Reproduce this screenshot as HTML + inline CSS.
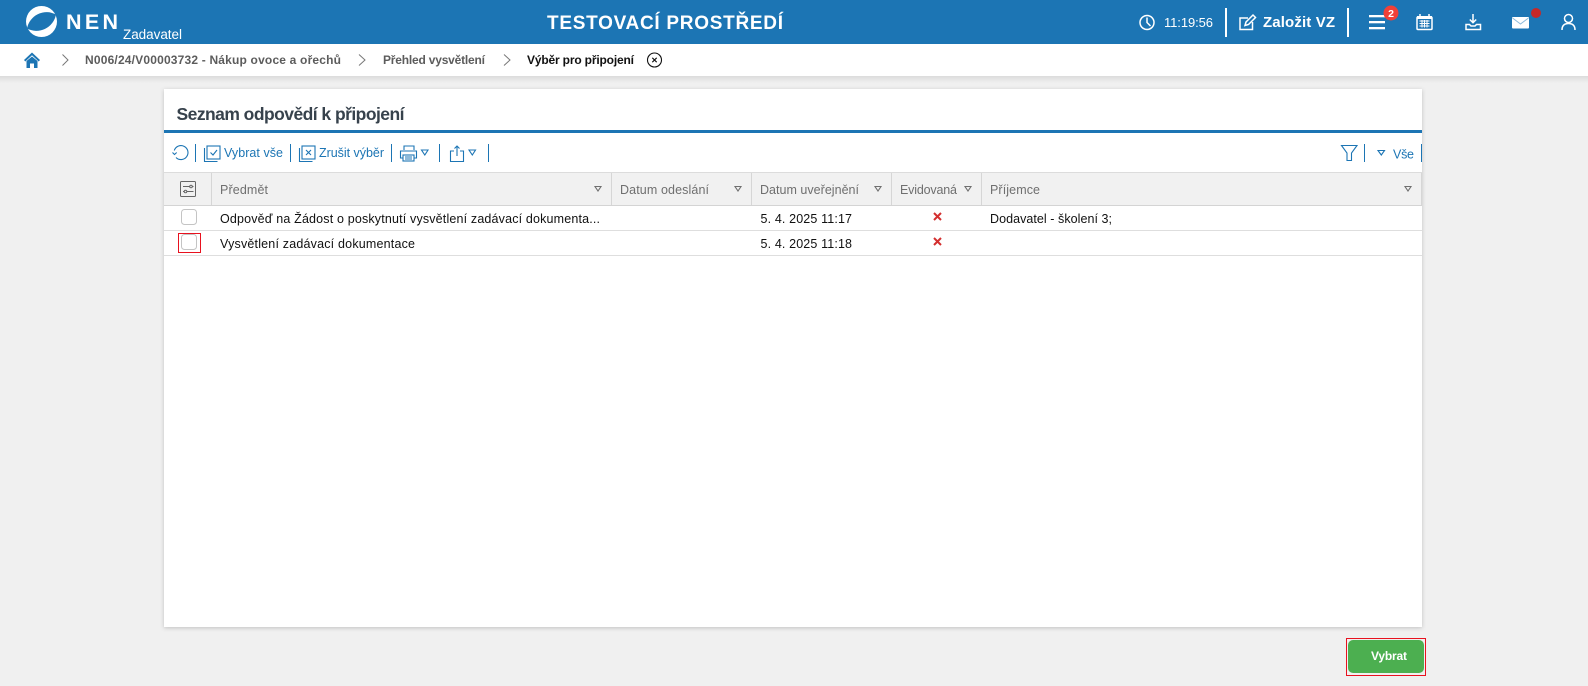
<!DOCTYPE html>
<html lang="cs">
<head>
<meta charset="utf-8">
<title>Seznam odpovědí k připojení</title>
<style>
html,body{margin:0;padding:0;width:1588px;height:686px;overflow:hidden;background:#f0f0f0}
svg{display:block}
text{font-family:"Liberation Sans",Arial,sans-serif;white-space:pre}
.hd{fill:#6f6f6f;font-size:12.5px}
.td{fill:#111;font-size:12.5px}
.bc{fill:#5c5c5c;font-size:12px;font-weight:bold}
.tb{fill:#1c75b4;font-size:12.5px}
.ic{fill:none;stroke:#1c75b4;stroke-width:1.1}
.w{fill:none;stroke:#fff;stroke-width:1.5}
.tri{fill:none;stroke:#6f6f6f;stroke-width:1.1}
</style>
</head>
<body>
<svg width="1588" height="686" viewBox="0 0 1588 686" xmlns="http://www.w3.org/2000/svg">
<defs>
<linearGradient id="sh" x1="0" y1="0" x2="0" y2="1"><stop offset="0" stop-color="#dcdcdc"/><stop offset="1" stop-color="#f0f0f0"/></linearGradient>
<filter id="ps" x="-2%" y="-2%" width="104%" height="104%"><feDropShadow dx="0" dy="1" stdDeviation="2" flood-color="#000" flood-opacity=".2"/></filter>
</defs>
<rect width="1588" height="686" fill="#f0f0f0"/>
<rect y="76" width="1588" height="7" fill="url(#sh)"/>
<rect y="44" width="1588" height="32" fill="#fff"/>
<rect width="1588" height="44" fill="#1c75b4"/>

<!-- logo -->
<circle cx="41.500" cy="21.500" r="15.500" fill="#fff"/>
<path d="M27 28.500A20 20 0 0 1 56 14.500A20 20 0 0 1 27 28.500Z" fill="#1c75b4"/>
<text x="66" y="29" font-size="21.500" font-weight="bold" fill="#fff" textLength="52" lengthAdjust="spacing">NEN</text>
<text x="123" y="39" font-size="13.500" fill="#fff" textLength="59" lengthAdjust="spacing">Zadavatel</text>
<text x="547" y="29" font-size="19" font-weight="bold" fill="#fff" textLength="236" lengthAdjust="spacing">TESTOVACÍ PROSTŘEDÍ</text>

<!-- header right -->
<circle cx="1147" cy="22.500" r="7" class="w"/>
<path d="M1147 17.500V22.500L1150.500 26" class="w"/>
<text x="1164" y="27" font-size="13" fill="#fff" textLength="49" lengthAdjust="spacing">11:19:56</text>
<rect x="1225" y="8" width="2" height="29" fill="#fff"/>
<path d="M1248 18H1240V29.500H1252.500V22" class="w"/>
<path d="M1245 25.500L1246 22L1253 15L1255.500 17.500L1248.500 24.500Z" class="w" stroke-width="1.200"/>
<text x="1263" y="27" font-size="15" font-weight="bold" fill="#fff" textLength="72" lengthAdjust="spacing">Založit VZ</text>
<rect x="1347" y="8" width="2" height="29" fill="#fff"/>
<rect x="1369" y="15" width="16" height="2.300" fill="#fff"/>
<rect x="1369" y="21" width="16" height="2.300" fill="#fff"/>
<rect x="1369" y="27" width="16" height="2.300" fill="#fff"/>
<circle cx="1391" cy="13" r="7.500" fill="#f04038"/>
<text x="1391" y="17" font-size="10.500" font-weight="bold" fill="#fff" text-anchor="middle">2</text>
<!-- calendar -->
<rect x="1417" y="17" width="15" height="12.500" rx="1" class="w"/>
<rect x="1417" y="16" width="15" height="3" fill="#fff"/>
<path d="M1420 14V17M1429 14V17" class="w"/>
<path d="M1419.500 21H1429.500M1419.500 23.500H1429.500M1419.500 26H1429.500M1422 20V27.500M1424.500 20V27.500M1427 20V27.500" stroke="#fff" stroke-width="1" fill="none"/>
<!-- download -->
<path d="M1473 14V22.500M1469.800 19.500L1473 22.700L1476.200 19.500" class="w"/>
<path d="M1466 24.500V29.500H1480.500V24.500H1476.500L1475 26H1471L1469.500 24.500Z" class="w"/>
<!-- mail -->
<rect x="1512" y="17" width="17" height="11.500" rx="1" fill="#fff"/>
<path d="M1512.500 18L1520.500 24L1528.500 18" fill="none" stroke="#8dbbdc" stroke-width="1"/>
<circle cx="1536" cy="13" r="5" fill="#c62828"/>
<!-- user -->
<circle cx="1568.500" cy="18.500" r="4" class="w"/>
<path d="M1562 30C1562 25.500 1564.500 23.500 1568.500 23.500C1572.500 23.500 1575 25.500 1575 30" class="w"/>

<!-- breadcrumb -->
<path d="M24 60L32 52.500L40 60L38.700 61.500L32 55.300L25.300 61.500Z" fill="#1c75b4"/>
<path d="M26.500 61L32 56.500L37.500 61V68H34V63.500H30V68H26.500Z" fill="#1c75b4"/>
<path d="M62.500 54.500L68 60L62.500 65.500" fill="none" stroke="#777" stroke-width="1"/>
<text x="85" y="64" class="bc" textLength="256" lengthAdjust="spacing">N006/24/V00003732 - Nákup ovoce a ořechů</text>
<path d="M359 54.500L365 60L359 65.500" fill="none" stroke="#777" stroke-width="1"/>
<text x="383" y="64" class="bc" textLength="102" lengthAdjust="spacing">Přehled vysvětlení</text>
<path d="M504 54.500L510 60L504 65.500" fill="none" stroke="#777" stroke-width="1"/>
<text x="527" y="64" font-size="12" font-weight="bold" fill="#111" textLength="107" lengthAdjust="spacing">Výběr pro připojení</text>
<circle cx="654.500" cy="60" r="7" fill="none" stroke="#111" stroke-width="1.100"/>
<path d="M652.300 57.800L656.700 62.200M656.700 57.800L652.300 62.200" stroke="#111" stroke-width="1.100"/>

<!-- panel -->
<rect x="164" y="89" width="1258" height="538" fill="#fff" filter="url(#ps)"/>
<text x="176.500" y="120" font-size="17.500" font-weight="bold" fill="#37424c" textLength="228" lengthAdjust="spacing">Seznam odpovědí k připojení</text>
<rect x="164" y="130" width="1258" height="3" fill="#1c75b4"/>

<!-- toolbar -->
<path d="M174.300 150.500A7 7 0 1 1 176 157.500" class="ic"/>
<path d="M172.500 152.500L174.500 154.500L176.700 152.500" class="ic"/>
<rect x="195" y="144" width="1" height="18" fill="#1c75b4"/>
<rect x="207" y="146" width="13" height="13" class="ic"/>
<path d="M204.500 148V161.500H217.500" class="ic"/>
<path d="M210.500 152.500L213 155L217 150" class="ic"/>
<text x="224" y="157" class="tb" textLength="59" lengthAdjust="spacing">Vybrat vše</text>
<rect x="290" y="144" width="1" height="18" fill="#1c75b4"/>
<rect x="302" y="146" width="13" height="13" class="ic"/>
<path d="M299.500 148V161.500H312.500" class="ic"/>
<path d="M306 150L311 155M311 150L306 155" class="ic"/>
<text x="319" y="157" class="tb" textLength="65" lengthAdjust="spacing">Zrušit výběr</text>
<rect x="391" y="144" width="1" height="18" fill="#1c75b4"/>
<path d="M404 150V146H414V150" class="ic"/>
<path d="M403 158H400.500V151H416.500V158H414" class="ic"/>
<rect x="403" y="155" width="11" height="6" class="ic"/>
<path d="M405 157H412M405 159H412" class="ic" stroke-width=".9"/>
<path d="M421.500 150H428L424.800 155Z" class="ic"/>
<rect x="439" y="144" width="1" height="18" fill="#1c75b4"/>
<path d="M454 151H450.500V161.500H463.500V151H460" class="ic"/>
<path d="M457 156V146M454.500 148.500L457 146L459.500 148.500" class="ic"/>
<path d="M469 150H475.500L472.300 155Z" class="ic"/>
<rect x="488" y="144" width="1" height="18" fill="#1c75b4"/>

<path d="M1341.500 145.500H1357L1351.500 153V160.500H1347V153Z" class="ic"/>
<rect x="1364" y="144" width="1" height="18" fill="#1c75b4"/>
<path d="M1378 150.500H1384.500L1381.300 155Z" class="ic"/>
<text x="1393" y="158.500" class="tb" textLength="21" lengthAdjust="spacing">Vše</text>
<rect x="1421" y="144" width="1" height="18" fill="#1c75b4"/>

<!-- table header -->
<rect x="164" y="172" width="1258" height="33" fill="#f1f1f1"/>
<rect x="164" y="172" width="1258" height="1" fill="#dcdcdc"/>
<rect x="164" y="205" width="1258" height="1" fill="#d4d4d4"/>
<rect x="211" y="173" width="1" height="32" fill="#d6d6d6"/>
<rect x="611" y="173" width="1" height="32" fill="#d6d6d6"/>
<rect x="751" y="173" width="1" height="32" fill="#d6d6d6"/>
<rect x="891" y="173" width="1" height="32" fill="#d6d6d6"/>
<rect x="981" y="173" width="1" height="32" fill="#d6d6d6"/>
<rect x="1421" y="173" width="1" height="32" fill="#d6d6d6"/>
<rect x="180.500" y="181.500" width="15" height="15" rx="1" fill="none" stroke="#666" stroke-width="1"/>
<path d="M183 186.500H190M192.500 186.500H193.500M183 191.500H184M187 191.500H193.500" stroke="#666" stroke-width="1" fill="none"/>
<circle cx="191" cy="186.500" r="1.300" fill="none" stroke="#666"/>
<circle cx="185.500" cy="191.500" r="1.300" fill="none" stroke="#666"/>
<text x="220" y="194" class="hd" textLength="48" lengthAdjust="spacing">Předmět</text>
<text x="620" y="194" class="hd" textLength="89" lengthAdjust="spacing">Datum odeslání</text>
<text x="760" y="194" class="hd" textLength="99" lengthAdjust="spacing">Datum uveřejnění</text>
<text x="900" y="194" class="hd" textLength="57" lengthAdjust="spacing">Evidovaná</text>
<text x="990" y="194" class="hd" textLength="50" lengthAdjust="spacing">Příjemce</text>
<path d="M595 186.500H601L598 191Z" class="tri"/>
<path d="M735 186.500H741L738 191Z" class="tri"/>
<path d="M875 186.500H881L878 191Z" class="tri"/>
<path d="M965 186.500H971L968 191Z" class="tri"/>
<path d="M1405 186.500H1411L1408 191Z" class="tri"/>

<!-- rows -->
<rect x="181.500" y="209.500" width="15" height="15" rx="3" fill="#fff" stroke="#c4c4c4"/>
<text x="220" y="223" class="td" textLength="380" lengthAdjust="spacing">Odpověď na Žádost o poskytnutí vysvětlení zadávací dokumenta...</text>
<text x="760.500" y="223" class="td" textLength="91.500" lengthAdjust="spacing">5. 4. 2025 11:17</text>
<path d="M934 213L941 220M941 213L934 220" stroke="#d32f2f" stroke-width="2" fill="none"/>
<text x="990" y="223" class="td" textLength="122" lengthAdjust="spacing">Dodavatel - školení 3;</text>
<rect x="164" y="230" width="1258" height="1" fill="#dedede"/>
<rect x="178.500" y="233.500" width="22" height="19" fill="none" stroke="#e8121f"/>
<rect x="181.500" y="234.500" width="15" height="15" rx="3" fill="#fff" stroke="#c4c4c4"/>
<text x="220" y="248" class="td" textLength="195" lengthAdjust="spacing">Vysvětlení zadávací dokumentace</text>
<text x="760.500" y="248" class="td" textLength="91.500" lengthAdjust="spacing">5. 4. 2025 11:18</text>
<path d="M934 238L941 245M941 238L934 245" stroke="#d32f2f" stroke-width="2" fill="none"/>
<rect x="164" y="255" width="1258" height="1" fill="#dedede"/>

<!-- button -->
<rect x="1346.500" y="638.500" width="79" height="37" fill="none" stroke="#e8121f"/>
<rect x="1348" y="640" width="76" height="33" rx="5" fill="#4caf50"/>
<text x="1371" y="660" font-size="12" font-weight="bold" fill="#fff" textLength="36" lengthAdjust="spacing">Vybrat</text>
</svg>
</body>
</html>
